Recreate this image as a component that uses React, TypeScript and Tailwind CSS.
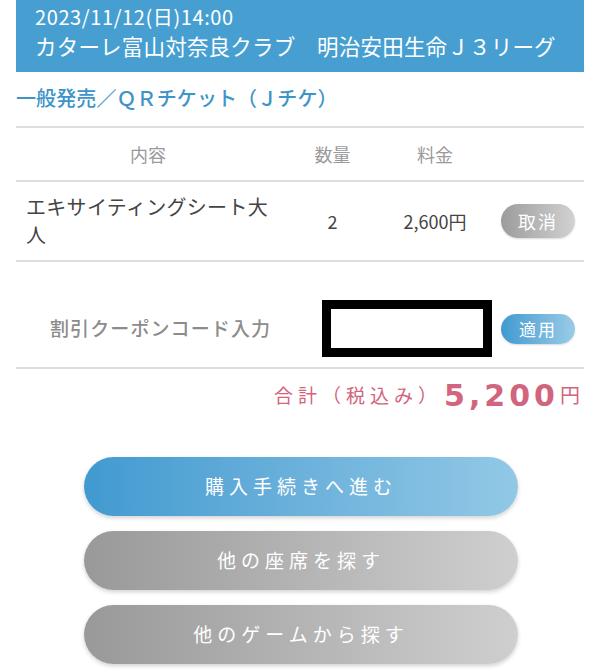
import React from "react";

const font = { fontFamily: '"Noto Sans CJK JP", "Noto Sans", sans-serif' };

export default function App() {
  return (
    <div className="w-[602px] h-[670px] bg-white overflow-hidden" style={font}>
      <div className="ml-[16px] w-[568px]">
        <div className="h-[72px] bg-[#479fd1] pl-[19px] pt-[3px] text-white">
          <div className="text-[20px] leading-[28px] tracking-[0.6px]">2023/11/12(日)14:00</div>
          <div className="text-[21.5px] leading-[30px] tracking-[0.2px]">カターレ富山対奈良クラブ　明治安田生命Ｊ３リーグ</div>
        </div>
        <div className="h-[54px] pb-[2px] flex items-center text-[20px] font-medium text-[#3d94c8] tracking-[0.1px]">
          一般発売／ＱＲチケット（Ｊチケ）
        </div>
        <div className="h-[56px] border-t-2 border-b-2 border-[#dedede] flex items-center text-[18px] text-[#9a9a9a]">
          <div className="w-[264px] text-center">内容</div>
          <div className="w-[105px] text-center">数量</div>
          <div className="w-[100px] text-center">料金</div>
        </div>
        <div className="h-[80px] border-b-2 border-[#dedede] flex items-center text-[#444]">
          <div className="w-[264px] pl-[10px] text-[20px] leading-[28px] tracking-[0.3px]">エキサイティングシート大人</div>
          <div className="w-[105px] text-center text-[18px]">2</div>
          <div className="w-[100px] text-center text-[18px]">2,600円</div>
          <div className="w-[99px] flex justify-end pr-[9px]">
            <div className="w-[74px] h-[34px] rounded-full bg-gradient-to-r from-[#9c9c9c] to-[#d2d2d2] text-white text-[18px] flex items-center justify-center tracking-[2px] shadow-[0_1px_2px_rgba(0,0,0,0.15)]">
              取消
            </div>
          </div>
        </div>
        <div className="h-[107px] pt-[28px] border-b-2 border-[#dedede] flex items-center">
          <div className="w-[306px] pl-[34px] text-[19px] font-medium text-[#8c8c8c] tracking-[1.1px]">割引クーポンコード入力</div>
          <div className="w-[170px] h-[57px] border-[9px] border-black bg-white"></div>
          <div className="flex-1 flex justify-end pr-[9px]">
            <div className="w-[74px] h-[30px] rounded-full bg-gradient-to-r from-[#3f9ad0] to-[#9acbe7] text-white text-[17px] flex items-center justify-center tracking-[2px] shadow-[0_1px_2px_rgba(0,0,0,0.15)]">
              適用
            </div>
          </div>
        </div>
        <div className="h-[52px] flex items-center justify-end text-[#d2647d] pr-[4px]">
          <span className="text-[19px] tracking-[5px]">合計（税込み）</span>
          <span className="text-[30px] font-bold tracking-[4px] ml-[2px]" style={{ fontFamily: '"DejaVu Sans", sans-serif' }}>5,200</span>
          <span className="text-[20px] ml-[1px]">円</span>
        </div>
      </div>
      <div className="mt-[36px] flex flex-col items-center gap-[15px]">
        <div className="w-[434px] h-[59px] rounded-full bg-gradient-to-r from-[#409ad0] to-[#92c8e6] text-white text-[19px] tracking-[5px] flex items-center justify-center shadow-[0_2px_4px_rgba(0,0,0,0.18)]">
          購入手続きへ進む
        </div>
        <div className="w-[434px] h-[59px] rounded-full bg-gradient-to-r from-[#999999] to-[#cfcfcf] text-white text-[19px] tracking-[5px] flex items-center justify-center shadow-[0_2px_4px_rgba(0,0,0,0.18)]">
          他の座席を探す
        </div>
        <div className="w-[434px] h-[59px] rounded-full bg-gradient-to-r from-[#999999] to-[#cfcfcf] text-white text-[19px] tracking-[5px] flex items-center justify-center shadow-[0_2px_4px_rgba(0,0,0,0.18)]">
          他のゲームから探す
        </div>
      </div>
    </div>
  );
}
